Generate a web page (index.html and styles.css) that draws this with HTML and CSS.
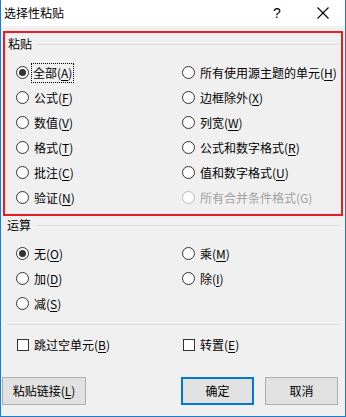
FILE: index.html
```html
<!DOCTYPE html>
<html lang="zh-CN">
<head>
<meta charset="utf-8">
<link rel="stylesheet" href="styles.css">
</head>
<body>
<div class="window">
  <div class="titlebar">
    <span class="title">选择性粘贴</span>
    <span class="help">?</span>
    <svg class="close" width="12" height="12" viewBox="0 0 12 12"><path d="M0.5 0.5 L11.5 11.5 M11.5 0.5 L0.5 11.5" stroke="#000" stroke-width="1.1" fill="none"/></svg>
  </div>
  <div class="paste-group">
    <div class="group-title"><span>粘贴</span><i class="rule"></i></div>
    <div class="options paste-options">
      <label class="opt"><span class="radio checked"></span><span class="focus">全部(<u>A</u>)</span></label>
      <label class="opt"><span class="radio"></span><span>所有使用源主题的单元(<u>H</u>)</span></label>
      <label class="opt"><span class="radio"></span><span>公式(<u>F</u>)</span></label>
      <label class="opt"><span class="radio"></span><span>边框除外(<u>X</u>)</span></label>
      <label class="opt"><span class="radio"></span><span>数值(<u>V</u>)</span></label>
      <label class="opt"><span class="radio"></span><span>列宽(<u>W</u>)</span></label>
      <label class="opt"><span class="radio"></span><span>格式(<u>T</u>)</span></label>
      <label class="opt"><span class="radio"></span><span>公式和数字格式(<u>R</u>)</span></label>
      <label class="opt"><span class="radio"></span><span>批注(<u>C</u>)</span></label>
      <label class="opt"><span class="radio"></span><span>值和数字格式(<u>U</u>)</span></label>
      <label class="opt"><span class="radio"></span><span>验证(<u>N</u>)</span></label>
      <label class="opt disabled"><span class="radio"></span><span>所有合并条件格式(G)</span></label>
    </div>
  </div>
  <div class="op-group">
    <div class="group-title"><span>运算</span><i class="rule"></i></div>
    <div class="options op-options">
      <label class="opt"><span class="radio checked"></span><span>无(<u>O</u>)</span></label>
      <label class="opt"><span class="radio"></span><span>乘(<u>M</u>)</span></label>
      <label class="opt"><span class="radio"></span><span>加(<u>D</u>)</span></label>
      <label class="opt"><span class="radio"></span><span>除(<u>I</u>)</span></label>
      <label class="opt"><span class="radio"></span><span>减(<u>S</u>)</span></label>
    </div>
  </div>
  <div class="separator"></div>
  <div class="options checks">
    <label class="opt"><span class="checkbox"></span><span>跳过空单元(<u>B</u>)</span></label>
    <label class="opt"><span class="checkbox"></span><span>转置(<u>E</u>)</span></label>
  </div>
  <div class="buttons">
    <button class="btn link-btn">粘贴链接(<u>L</u>)</button>
    <span class="spacer"></span>
    <button class="btn default">确定</button>
    <button class="btn">取消</button>
  </div>
</div>
</body>
</html>
```

FILE: styles.css
```css
* { box-sizing: border-box; }
html, body { margin: 0; padding: 0; }
body {
  width: 346px;
  height: 417px;
  background: #f0f0f0;
  font-family: "Noto Sans CJK SC", "Noto Sans", sans-serif;
  font-size: 12px;
  color: #000;
}
.window {
  width: 346px;
  height: 417px;
  border: 1px solid #1c7ccf;
  border-top: none;
  background: #f0f0f0;
  display: flex;
  flex-direction: column;
}
.titlebar {
  height: 26px;
  background: #fff;
  display: flex;
  align-items: center;
  padding-left: 3px;
  flex: none;
}
.title { flex: 1; font-size: 12px; line-height: 16px; }
.help {
  font-family: "Liberation Sans", sans-serif;
  font-size: 14px;
  width: 10px;
  margin-right: 34px;
  line-height: 16px;
}
.close { margin-right: 16px; }

.paste-group {
  margin: 5px 2px 0 2px;
  border: 2px solid #ec1c24;
  height: 185px;
}
.group-title {
  display: flex;
  align-items: center;
  height: 22px;
  padding-left: 3px;
}
.group-title span { line-height: 16px; }
.rule {
  flex: 1;
  height: 1px;
  background: #dcdcdc;
  margin-left: 5px;
  margin-right: 3px;
}
.options {
  display: grid;
  grid-template-columns: 166px 1fr;
  grid-auto-rows: 25px;
}
.paste-options { margin-top: 5px; padding-left: 11px; }
.opt {
  display: flex;
  align-items: center;
  white-space: nowrap;
  line-height: 16px;
}
.radio {
  width: 13px;
  height: 13px;
  border: 1px solid #333;
  border-radius: 50%;
  background: #fff;
  margin-right: 5px;
  flex: none;
  display: flex;
  align-items: center;
  justify-content: center;
}
.radio.checked::after {
  content: "";
  width: 7px;
  height: 7px;
  border-radius: 50%;
  background: #333;
}
.focus {
  outline: 1px dotted #000;
  outline-offset: 0;
  padding: 1px 1px;
  margin-left: -2px;
}
.disabled { color: #a0a0a0; }
.disabled .radio { border-color: #bcbcbc; }

.op-group .group-title { height: 18px; padding-left: 6px; }
.op-group .rule { margin-left: 6px; margin-right: 5px; }
.op-options { margin-top: 7px; padding-left: 15px; }

.separator {
  height: 1px;
  background: #dcdcdc;
  margin: 8px 6px 0 6px;
}
.checks { margin-top: 8px; padding-left: 16px; grid-auto-rows: 24px; }
.checkbox {
  width: 12px;
  height: 12px;
  border: 1px solid #333;
  background: #fff;
  margin-right: 5px;
  flex: none;
}

.buttons {
  display: flex;
  margin-top: 20px;
  padding-left: 1px;
  padding-right: 7px;
}
.spacer { flex: 1; }
.btn {
  height: 28px;
  width: 73px;
  background: #e1e1e1;
  border: 1px solid #adadad;
  font-family: inherit;
  font-size: 12px;
  color: #000;
  padding: 0;
  margin: 0;
  line-height: 16px;
}
.link-btn { width: 84px; }
.btn.default { border: 2px solid #0078d7; margin-right: 11px; }
u { text-decoration: underline; text-underline-offset: 2px; }
```
